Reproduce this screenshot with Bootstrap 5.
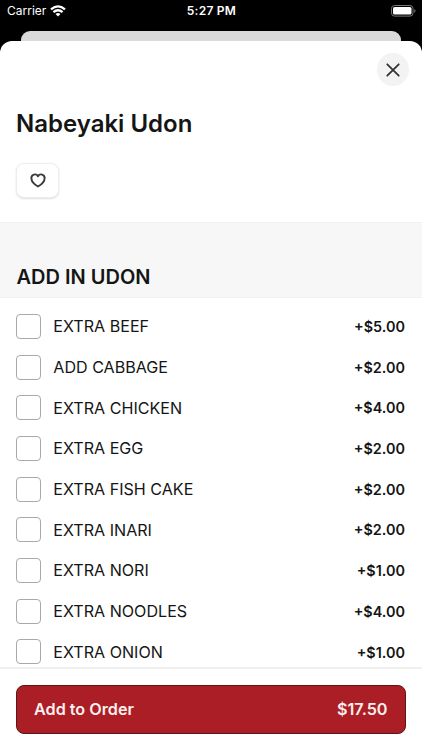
<!DOCTYPE html>
<html lang="en">
<head>
<meta charset="utf-8">
<meta name="viewport" content="width=device-width, initial-scale=1">
<title>Nabeyaki Udon</title>
<link href="https://cdn.jsdelivr.net/npm/bootstrap@5.3.0/dist/css/bootstrap.min.css" rel="stylesheet">
<style>
body{font-family:Inter,"Liberation Sans",sans-serif;background:#000;color:#151515;height:750px;overflow:hidden}
svg{display:block}
.status{height:31px;padding:0 6px 9px 7px;font-size:12px;line-height:22px}
.status .clock{font-weight:600;font-size:12px;letter-spacing:.25px}
.behind{height:10px;margin:0 21px;background:#dadada;border-radius:9px 9px 0 0}
.sheet{height:709px;background:#fff;border-radius:12px 12px 0 0}
.sheet-head{height:181px;padding:12px 13px 0 16px}
.close-btn{width:32px;height:33px;background:#f3f3f3}
.dish{font-size:24px;font-weight:600;line-height:30px;margin-top:23px}
.fav{width:43px;height:35px;margin-top:24px;border-radius:8px;border:1px solid #ededed;box-shadow:0 1px 2px rgba(0,0,0,.13)}
.section-head{height:76px;background:#f7f7f7;border-top:1px solid #f1f1f1;border-bottom:1px solid #f1f1f1;padding:0 16.5px 8px}
.section-head h2{font-size:20px;font-weight:600;line-height:24px;margin:0}
.options{height:369px;padding:8px 17px 0 16px}
.option{height:40.7px;font-size:16.1px}
.option .form-check-input{width:25px;height:25px;margin:0 12.3px 0 0;border:1px solid #a9a9a9;border-radius:4px}
.price{font-size:14.4px;font-weight:600;padding-top:1px}
.order-bar{height:83px;border-top:2px solid #f0f0f0;padding:15.500px 16px 0;background:#fff}
.order-btn{height:49px;background:#ab1e25;border:1px solid #5c1519;border-radius:8px;color:#fbeeee;font-size:16.2px;font-weight:600;padding:0 17.5px 0 17px}
</style>
<script src="https://cdn.jsdelivr.net/npm/bootstrap@5.3.0/dist/js/bootstrap.bundle.min.js"></script>
</head>
<body>
<header class="status row g-0 text-white">
  <div class="col d-flex align-items-center gap-1"><span>Carrier</span>
    <svg width="16" height="12" viewBox="0 0 16 12" fill="none" stroke="#fff" stroke-width="2.3"><path d="M1 4.400Q8-1.600 15 4.400M3.400 7.200Q8 3.200 12.600 7.200"/><path d="M8 11.500 5.500 9Q8 7 10.500 9Z" fill="#fff" stroke="none"/></svg>
  </div>
  <div class="col text-center clock">5:27 PM</div>
  <div class="col d-flex align-items-center justify-content-end">
    <svg width="25" height="12" viewBox="0 0 25 12"><rect x=".5" y=".5" width="21.5" height="10.6" rx="3" fill="none" stroke="#777"/><rect x="2" y="2" width="18.5" height="7.6" rx="1.6" fill="#fff"/><path d="M23.3 4v3.8q1.2-.4 1.2-1.9T23.3 4" fill="#777"/></svg>
  </div>
</header>
<div class="behind"></div>
<main class="sheet d-flex flex-column overflow-hidden">
  <section class="sheet-head">
    <div class="d-flex justify-content-end"><button class="close-btn btn rounded-circle border-0 p-0 d-flex align-items-center justify-content-center" aria-label="Close"><svg width="14" height="14" viewBox="0 0 14 14" stroke="#333" stroke-width="1.8" stroke-linecap="round"><path d="M1.3 1.3 12.7 12.7M12.7 1.3 1.3 12.7"/></svg></button></div>
    <h1 class="dish mb-0">Nabeyaki Udon</h1>
    <button class="fav btn bg-white p-0 d-flex align-items-center justify-content-center" aria-label="Favorite"><svg width="16" height="15" viewBox="0 0 16 15" fill="none" stroke="#3a3a3a" stroke-width="1.9" stroke-linejoin="round"><path d="M8 13.500C5.300 12 1.400 8.900 1.400 5.300A3.550 3.550 0 0 1 8 3.200A3.550 3.550 0 0 1 14.600 5.300C14.600 8.900 10.700 12 8 13.500Z"/></svg></button>
  </section>
  <div class="section-head d-flex align-items-end"><h2>ADD IN UDON</h2></div>
  <div class="options overflow-hidden">
    <label class="option d-flex align-items-center"><input class="form-check-input" type="checkbox"><span>EXTRA BEEF</span><span class="price ms-auto">+$5.00</span></label>
    <label class="option d-flex align-items-center"><input class="form-check-input" type="checkbox"><span>ADD CABBAGE</span><span class="price ms-auto">+$2.00</span></label>
    <label class="option d-flex align-items-center"><input class="form-check-input" type="checkbox"><span>EXTRA CHICKEN</span><span class="price ms-auto">+$4.00</span></label>
    <label class="option d-flex align-items-center"><input class="form-check-input" type="checkbox"><span>EXTRA EGG</span><span class="price ms-auto">+$2.00</span></label>
    <label class="option d-flex align-items-center"><input class="form-check-input" type="checkbox"><span>EXTRA FISH CAKE</span><span class="price ms-auto">+$2.00</span></label>
    <label class="option d-flex align-items-center"><input class="form-check-input" type="checkbox"><span>EXTRA INARI</span><span class="price ms-auto">+$2.00</span></label>
    <label class="option d-flex align-items-center"><input class="form-check-input" type="checkbox"><span>EXTRA NORI</span><span class="price ms-auto">+$1.00</span></label>
    <label class="option d-flex align-items-center"><input class="form-check-input" type="checkbox"><span>EXTRA NOODLES</span><span class="price ms-auto">+$4.00</span></label>
    <label class="option d-flex align-items-center"><input class="form-check-input" type="checkbox"><span>EXTRA ONION</span><span class="price ms-auto">+$1.00</span></label>
  </div>
  <footer class="order-bar"><button class="order-btn btn w-100 d-flex align-items-center justify-content-between"><span>Add to Order</span><span>$17.50</span></button></footer>
</main>
</body>
</html>
